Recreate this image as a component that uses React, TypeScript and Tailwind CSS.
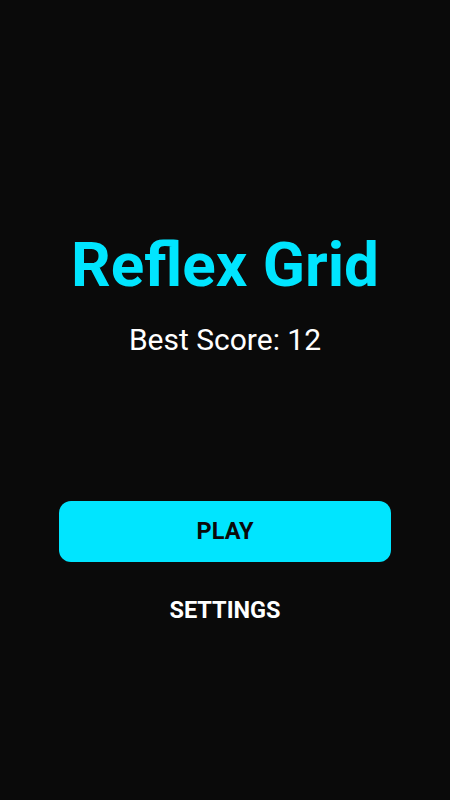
export default function App() {
  return (
    <div
      className="min-h-screen w-full bg-[#0a0a0a] flex flex-col items-center pt-[234px]"
      style={{ fontFamily: 'Roboto, "Liberation Sans", sans-serif' }}
    >
      <h1 className="text-[62px] leading-none font-bold text-[#00e5ff]">Reflex Grid</h1>
      <p className="mt-[29px] text-[30px] leading-none text-white">Best Score: 12</p>

      <div className="w-full px-[59px] mt-[146px] flex flex-col items-center">
        <button className="w-full h-[61px] rounded-[12px] bg-[#00e5ff] text-[#0a0a0a] text-[23.5px] font-bold">
          PLAY
        </button>
        <button className="mt-[37px] text-[23.5px] leading-none font-bold text-white">
          SETTINGS
        </button>
      </div>
    </div>
  );
}
